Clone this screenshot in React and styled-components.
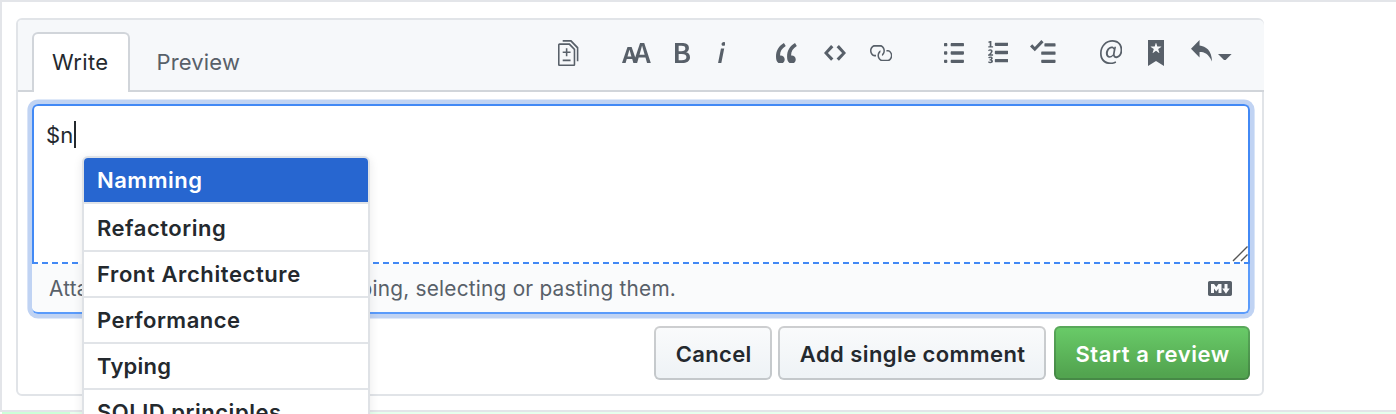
import React from "react";
import styled, { createGlobalStyle } from "styled-components";

const GlobalStyle = createGlobalStyle`
  *, *::before, *::after { box-sizing: border-box; }
  body {
    margin: 0;
    background: #fff;
    color: #24292e;
    font-family: Inter, "Liberation Sans", sans-serif;
    overflow: hidden;
  }
`;

const Page = styled.div`
  position: relative;
  height: 414px;
  overflow: hidden;
  display: flex;
  flex-direction: column;
`;

const CommentCell = styled.div`
  height: 412px;
  flex: none;
  padding: 16px 0 0 14px;
  border: solid #e3e5e9;
  border-width: 2px 0 2px 2px;
`;

const AddedLine = styled.div`
  height: 2px;
  margin-left: 2px;
  display: flex;
  background: #e6ffed;
`;

const AddedLineNumber = styled.div`
  width: 68px;
  background: #cdffd8;
`;

const Form = styled.div`
  width: 1248px;
  height: 378px;
  border: 2px solid #e1e4e8;
  border-radius: 6px;
`;

const Header = styled.div`
  display: flex;
  align-items: flex-start;
  height: 72px;
  margin-right: -2px;
  padding-left: 14px;
  background: #f6f8fa;
  border-bottom: 2px solid #d1d5da;
  border-radius: 4px 5px 0 0;
`;

const Tab = styled.div`
  height: 60px;
  margin-top: 12px;
  padding: 0 ${(p) => (p.$active ? 18 : 24.5)}px;
  width: ${(p) => (p.$active ? 98 : 140)}px;
  line-height: 57px;
  font-size: 22px;
  letter-spacing: ${(p) => p.$tracking}px;
  white-space: nowrap;
  color: ${(p) => (p.$active ? "#24292e" : "#586069")};
  background: ${(p) => (p.$active ? "#fff" : "transparent")};
  border: 2px solid ${(p) => (p.$active ? "#d1d5da" : "transparent")};
  border-bottom: 0;
  border-radius: 6px 6px 0 0;
`;

const Toolbar = styled.div`
  display: flex;
  align-items: flex-start;
  margin-left: auto;
  padding-right: 32px;
`;

const ToolIcon = styled.svg`
  flex: none;
  display: block;
  width: ${(p) => p.$w}px;
  height: ${(p) => p.$h}px;
  margin: ${(p) => p.$top}px 0 0 ${(p) => p.$gap}px;
  fill: #586069;
`;

const Field = styled.div`
  width: 1218px;
  height: 210px;
  margin: 12px 0 0 14px;
  border-radius: 6px;
  box-shadow: 0 0 0 4.6px #c0d3f3;
  display: flex;
  flex-direction: column;
`;

const TextArea = styled.div`
  display: flex;
  justify-content: space-between;
  height: 158px;
  padding: 15px 0 0 12px;
  background: #fff;
  border: 2px solid #4289f5;
  border-bottom: 0;
  border-radius: 6px 6px 0 0;
`;

const Typed = styled.div`
  display: flex;
  height: 27px;
  font-size: 22px;
  line-height: 27px;
  letter-spacing: 0.2px;
`;

const TypedText = styled.span`
  padding-top: 1px;
`;

const Caret = styled.span`
  width: 2px;
  height: 27px;
  background: #24292e;
`;

const ResizeGrip = styled.svg`
  align-self: flex-end;
  width: 16px;
  height: 16px;
  fill: none;
  stroke: #555;
  stroke-width: 1.4;
`;

const DashedRule = styled.div`
  height: 2px;
  border: solid #4289f5;
  border-width: 0 2px;
  background: repeating-linear-gradient(
    90deg,
    #4289f5 0 4px,
    #fff 4px 8px,
    #4289f5 8px 10.017px
  );
`;

const FieldFooter = styled.div`
  display: flex;
  align-items: center;
  justify-content: space-between;
  height: 50px;
  padding: 0 16px 0 17px;
  font-size: 20.8px;
  line-height: 26px;
  letter-spacing: 0.22px;
  white-space: nowrap;
  color: #586069;
  background: #fafbfc;
  border: solid #5a9bfb;
  border-width: 0 2px 2px 0;
  border-radius: 0 0 6px 6px;
`;

const FooterHint = styled.span`
  padding-top: 2px;
`;

const MarkdownIcon = styled.svg`
  width: 24px;
  height: 15px;
  fill: #586069;
`;

const Actions = styled.div`
  display: flex;
  margin: 12px 12px 0 0;
  justify-content: flex-end;
`;

const Button = styled.button`
  width: ${(p) => p.$w}px;
  height: 54px;
  margin-left: ${(p) => p.$gap || 0}px;
  padding: 2px 0 0 1.4px;
  font: 600 22px Inter, "Liberation Sans", sans-serif;
  letter-spacing: ${(p) => p.$tracking}px;
  white-space: nowrap;
  color: ${(p) => (p.$primary ? "#fff" : "#24292e")};
  background: ${(p) =>
    p.$primary
      ? "linear-gradient(180deg, #6acc69, #52a44f 90%)"
      : "linear-gradient(180deg, #fafbfc, #eff3f6 90%)"};
  background-origin: border-box;
  border: 2px solid rgba(27, 31, 35, 0.2);
  border-radius: 6px;
`;

const Suggestions = styled.ul`
  position: absolute;
  left: 82px;
  top: 156px;
  width: 288px;
  margin: 0;
  padding: 0;
  list-style: none;
  overflow: hidden;
  background: #fff;
  border: 2px solid #dfe2e6;
  border-radius: 6px;
  box-shadow: 0 2px 10px rgba(27, 31, 35, 0.1);
`;

const Suggestion = styled.li`
  height: 46px;
  padding: 0 13px;
  line-height: 45px;
  font-size: 22px;
  font-weight: 600;
  letter-spacing: ${(p) => p.$tracking}px;
  white-space: nowrap;
  color: ${(p) => (p.$selected ? "#fff" : "#24292e")};
  background: ${(p) => (p.$selected ? "#2766d0" : "#fff")};
  background-clip: padding-box;
  border-bottom: 2px solid #e1e4e8;
  &:nth-child(2) {
    height: 48px;
    padding-top: 2px;
  }
`;

const icons = [
  { w: 20.4, h: 26, top: 20, gap: 0, box: "0 0 13 16", d: "M6 7h2v1H6v2H5V8H3V7h2V5h1v2zm-3 6h5v-1H3v1zM7.5 2L11 5.5V15c0 .55-.45 1-1 1H1c-.55 0-1-.45-1-1V3c0-.55.45-1 1-1h6.5zM10 6L7 3H1v12h9V6zM8.5 0H3v1h5l4 4v8h1V4.5L8.5 0z" },
  { w: 28.8, h: 20, top: 23, gap: 43.4, box: "0 2 17.32 12", d: "M13.62 9.08L12.1 3.66h-.06l-1.5 5.42h3.08zM5.7 10.13S4.68 6.52 4.53 6.02h-.08l-1.13 4.11H5.7zM17.31 14h-2.25l-.95-3.25h-4.07L9.09 14H6.84l-.69-2.33H2.87L2.17 14H0l3.3-9.59h2.5l2.17 6.34L10.86 2h2.52l3.94 12h-.01z" },
  { w: 15, h: 20, top: 23, gap: 24.4, box: "1 2 8.76 12", d: "M1 2h3.83c2.48 0 4.3.75 4.3 2.95 0 1.14-.63 2.23-1.67 2.61v.06c1.33.3 2.3 1.23 2.3 2.86 0 2.39-1.97 3.52-4.61 3.52H1V2zm3.66 4.95c1.67 0 2.38-.66 2.38-1.69 0-1.17-.78-1.61-2.34-1.61H3.13v3.3h1.53zm.27 5.39c1.77 0 2.75-.64 2.75-1.98 0-1.27-.95-1.81-2.75-1.81h-1.8v3.8h1.8v-.01z" },
  { w: 7.6, h: 21.3, top: 21.7, gap: 27.7, box: "1 1 4.63 13", d: "M2.81 5h1.98L3 14H1l1.81-9zm.36-2.7c0-.7.58-1.3 1.33-1.3.56 0 1.13.38 1.13 1.03 0 .75-.59 1.3-1.33 1.3-.58 0-1.13-.38-1.13-1.03z" },
  { w: 20.8, h: 20.6, top: 22.7, gap: 50.7, box: "0 1.66 13.16 12.67", d: "M6.16 3.5C3.73 5.06 2.55 6.67 2.55 9.36c.16-.05.3-.05.44-.05 1.27 0 2.5.86 2.5 2.41 0 1.61-1.03 2.61-2.5 2.61-1.9 0-2.99-1.52-2.99-4.25 0-3.8 1.75-6.53 5.02-8.42L6.16 3.5zm7 0c-2.43 1.56-3.61 3.17-3.61 5.86.16-.05.3-.05.44-.05 1.27 0 2.5.86 2.5 2.41 0 1.61-1.03 2.61-2.5 2.61-1.89 0-2.98-1.52-2.98-4.25 0-3.8 1.75-6.53 5.02-8.42l1.14 1.84h-.01z" },
  { w: 22, h: 15.8, top: 25.2, gap: 27.2, box: "0 3 14 10", d: "M9.5 3L8 4.5 11.5 8 8 11.5 9.5 13 14 8 9.5 3zm-5 0L0 8l4.5 5L6 11.5 2.5 8 6 4.5 4.5 3z" },
  { w: 22.4, h: 16.3, top: 25, gap: 23.6, box: "1 3 15 10", d: "M4 9h1v1H4c-1.5 0-3-1.69-3-3.5S2.55 3 4 3h4c1.45 0 3 1.69 3 3.5 0 1.41-.91 2.72-2 3.25V8.59c.58-.45 1-1.27 1-2.09C10 5.22 8.98 4 8 4H4c-.98 0-2 1.22-2 2.5S3 9 4 9zm9-3h-1v1h1c1 0 2 1.22 2 2.5S13.98 12 13 12H9c-.98 0-2-1.22-2-2.5 0-.83.42-1.64 1-2.09V6.25c-1.09.53-2 1.84-2 3.25C6 11.31 7.55 13 9 13h4c1.45 0 3-1.69 3-3.5S14.5 6 13 6z" },
  { w: 20, h: 20, top: 23, gap: 52, box: "0 2 12 12", d: "M2 13c0 .59 0 1-.59 1H.59C0 14 0 13.59 0 13c0-.59 0-1 .59-1h.81c.59 0 .59.41.59 1H2zm2.59-9h6.81c.59 0 .59-.41.59-1 0-.59 0-1-.59-1H4.59C4 2 4 2.41 4 3c0 .59 0 1 .59 1zM1.41 7H.59C0 7 0 7.41 0 8c0 .59 0 1 .59 1h.81c.59 0 .59-.41.59-1 0-.59 0-1-.59-1h.01zm0-5H.59C0 2 0 2.41 0 3c0 .59 0 1 .59 1h.81c.59 0 .59-.41.59-1 0-.59 0-1-.59-1h.01zm10 5H4.59C4 7 4 7.41 4 8c0 .59 0 1 .59 1h6.81c.59 0 .59-.41.59-1 0-.59 0-1-.59-1h.01zm0 5H4.59C4 12 4 12.41 4 13c0 .59 0 1 .59 1h6.81c.59 0 .59-.41.59-1 0-.59 0-1-.59-1h.01z" },
  { w: 20.4, h: 23, top: 21.3, gap: 24, box: "0 1 12 14", d: "M12 13c0 .59 0 1-.59 1H4.59C4 14 4 13.59 4 13c0-.59 0-1 .59-1h6.81c.59 0 .59.41.59 1H12zM4.59 4h6.81c.59 0 .59-.41.59-1 0-.59 0-1-.59-1H4.59C4 2 4 2.41 4 3c0 .59 0 1 .59 1zm6.81 3H4.59C4 7 4 7.41 4 8c0 .59 0 1 .59 1h6.81c.59 0 .59-.41.59-1 0-.59 0-1-.59-1zM2 1h-.72c-.3.2-.58.28-1.03.34V2H1v2.14H.16V5H3v-.86H2V1zm.25 8.14c-.17 0-.45.03-.66.06.53-.56 1.14-1.25 1.14-1.89C2.72 6.53 2.17 6 1.38 6c-.59 0-.97.2-1.38.64l.58.58c.19-.19.38-.38.64-.38.28 0 .48.16.48.52 0 .53-.77 1.2-1.7 2.06V10h3v-.86h-.75zm-.08 3.28v-.03c.44-.19.64-.47.64-.86 0-.7-.56-1.11-1.44-1.11-.48 0-.89.19-1.28.52l.55.64c.25-.2.44-.31.69-.31.27 0 .42.13.42.36 0 .27-.2.44-.86.44v.75c.83 0 .98.17.98.47 0 .25-.23.38-.58.38-.28 0-.56-.14-.81-.38l-.48.66c.3.36.77.56 1.41.56.83 0 1.53-.41 1.53-1.16 0-.5-.31-.81-.77-.94v.01z" },
  { w: 25.6, h: 23, top: 20, gap: 22, box: "0 0 16 14", d: "M15.41 9H7.59C7 9 7 8.59 7 8c0-.59 0-1 .59-1h7.81c.59 0 .59.41.59 1 0 .59 0 1-.59 1h.01zM9.59 4C9 4 9 3.59 9 3c0-.59 0-1 .59-1h5.81c.59 0 .59.41.59 1 0 .59 0 1-.59 1H9.59zM0 3.91l1.41-1.3L3 4.2 7.09 0 8.5 1.41 3 6.91l-3-3zM7.59 12h7.81c.59 0 .59.41.59 1 0 .59 0 1-.59 1H7.59C7 14 7 13.59 7 13c0-.59 0-1 .59-1z" },
  { w: 22.4, h: 24.2, top: 20, gap: 44, box: "0 0 14 15", d: "M6.58 15c1.25 0 2.52-.31 3.56-.94l-.42-.94c-.84.52-1.89.83-3.03.83-3.23 0-5.64-2.08-5.64-5.72 0-4.37 3.23-7.18 6.58-7.18 3.45 0 5.22 2.19 5.22 5.2 0 2.39-1.34 3.86-2.5 3.86-1.05 0-1.36-.73-1.05-2.19l.73-3.75H8.98l-.11.72c-.41-.63-.94-.83-1.56-.83-2.19 0-3.66 2.39-3.66 4.38 0 1.67.94 2.61 2.3 2.61.84 0 1.67-.53 2.3-1.25.11.94.94 1.45 1.98 1.45 1.67 0 3.77-1.67 3.77-5C14 2.61 11.59 0 7.83 0 3.66 0 0 3.33 0 8.33 0 12.71 2.92 15 6.58 15zm-.31-5c-.73 0-1.36-.52-1.36-1.67 0-1.45.94-3.22 2.41-3.22.52 0 .84.2 1.25.83l-.52 3.02c-.63.73-1.25 1.05-1.78 1.05V10z" },
  { w: 16, h: 26, top: 20, gap: 25.6, box: "0 0 10 16", d: "M0 0v16l5-3.09L10 16V0H0zm8.22 4.25L6.36 5.61l.72 2.16c.06.22-.02.28-.2.17L5 6.6 3.12 7.94c-.19.11-.25.05-.2-.17l.72-2.16-1.86-1.36c-.17-.16-.14-.23.09-.23l2.3-.03.7-2.16h.25l.7 2.16 2.3.03c.23 0 .27.08.09.23h.01z" },
  { w: 21, h: 21.5, top: 20, gap: 27, box: "0.5 0 13.5 13.5", d: "M6 3.5c3.92.44 8 3.125 8 10-2.312-5.062-4.75-6-8-6V11L.5 5.5 6 0v3.5z" },
  { w: 13.6, h: 6.8, top: 33.7, gap: 6.4, box: "0 0 14 7", d: "M0 0h14L7 7z" },
];

const suggestions = [
  ["Namming", 0.5],
  ["Refactoring", 0.52],
  ["Front Architecture", 0.6],
  ["Performance", 0.47],
  ["Typing", 0.25],
  ["SOLID principles", 0.52],
];

export default function App() {
  return (
    <Page>
      <GlobalStyle />
      <CommentCell>
        <Form>
          <Header>
            <Tab $active $tracking={0.35}>Write</Tab>
            <Tab $tracking={0.15}>Preview</Tab>
            <Toolbar>
              {icons.map((icon) => (
                <ToolIcon
                  key={icon.d}
                  viewBox={icon.box}
                  preserveAspectRatio="none"
                  $w={icon.w}
                  $h={icon.h}
                  $top={icon.top}
                  $gap={icon.gap}
                >
                  <path fillRule="evenodd" d={icon.d} />
                </ToolIcon>
              ))}
            </Toolbar>
          </Header>
          <Field>
            <TextArea>
              <Typed>
                <TypedText>$n</TypedText>
                <Caret />
              </Typed>
              <ResizeGrip viewBox="0 0 16 16">
                <path d="M1 15 15.5 .5M9 15l6.5-6.5" />
              </ResizeGrip>
            </TextArea>
            <DashedRule />
            <FieldFooter>
              <FooterHint>
                Attach files by dragging &amp; dropping, selecting or pasting them.
              </FooterHint>
              <MarkdownIcon viewBox="0 3 16 10">
                <path
                  fillRule="evenodd"
                  d="M14.85 3H1.15C.52 3 0 3.52 0 4.15v7.69C0 12.48.52 13 1.15 13h13.69c.64 0 1.15-.52 1.15-1.15v-7.7C16 3.52 15.48 3 14.85 3zM9 11H7V8L5.5 9.92 4 8v3H2V5h2l1.5 2L7 5h2v6zm2.99.5L9.5 8H11V5h2v3h1.5l-2.51 3.5z"
                />
              </MarkdownIcon>
            </FieldFooter>
          </Field>
          <Actions>
            <Button $w={118} $tracking={0.35}>Cancel</Button>
            <Button $w={268} $gap={6} $tracking={0.42}>Add single comment</Button>
            <Button $w={196} $gap={8} $tracking={0.6} $primary>Start a review</Button>
          </Actions>
        </Form>
      </CommentCell>
      <AddedLine>
        <AddedLineNumber />
      </AddedLine>
      <Suggestions>
        {suggestions.map(([name, tracking], i) => (
          <Suggestion key={name} $selected={i === 0} $tracking={tracking}>
            {name}
          </Suggestion>
        ))}
      </Suggestions>
    </Page>
  );
}
